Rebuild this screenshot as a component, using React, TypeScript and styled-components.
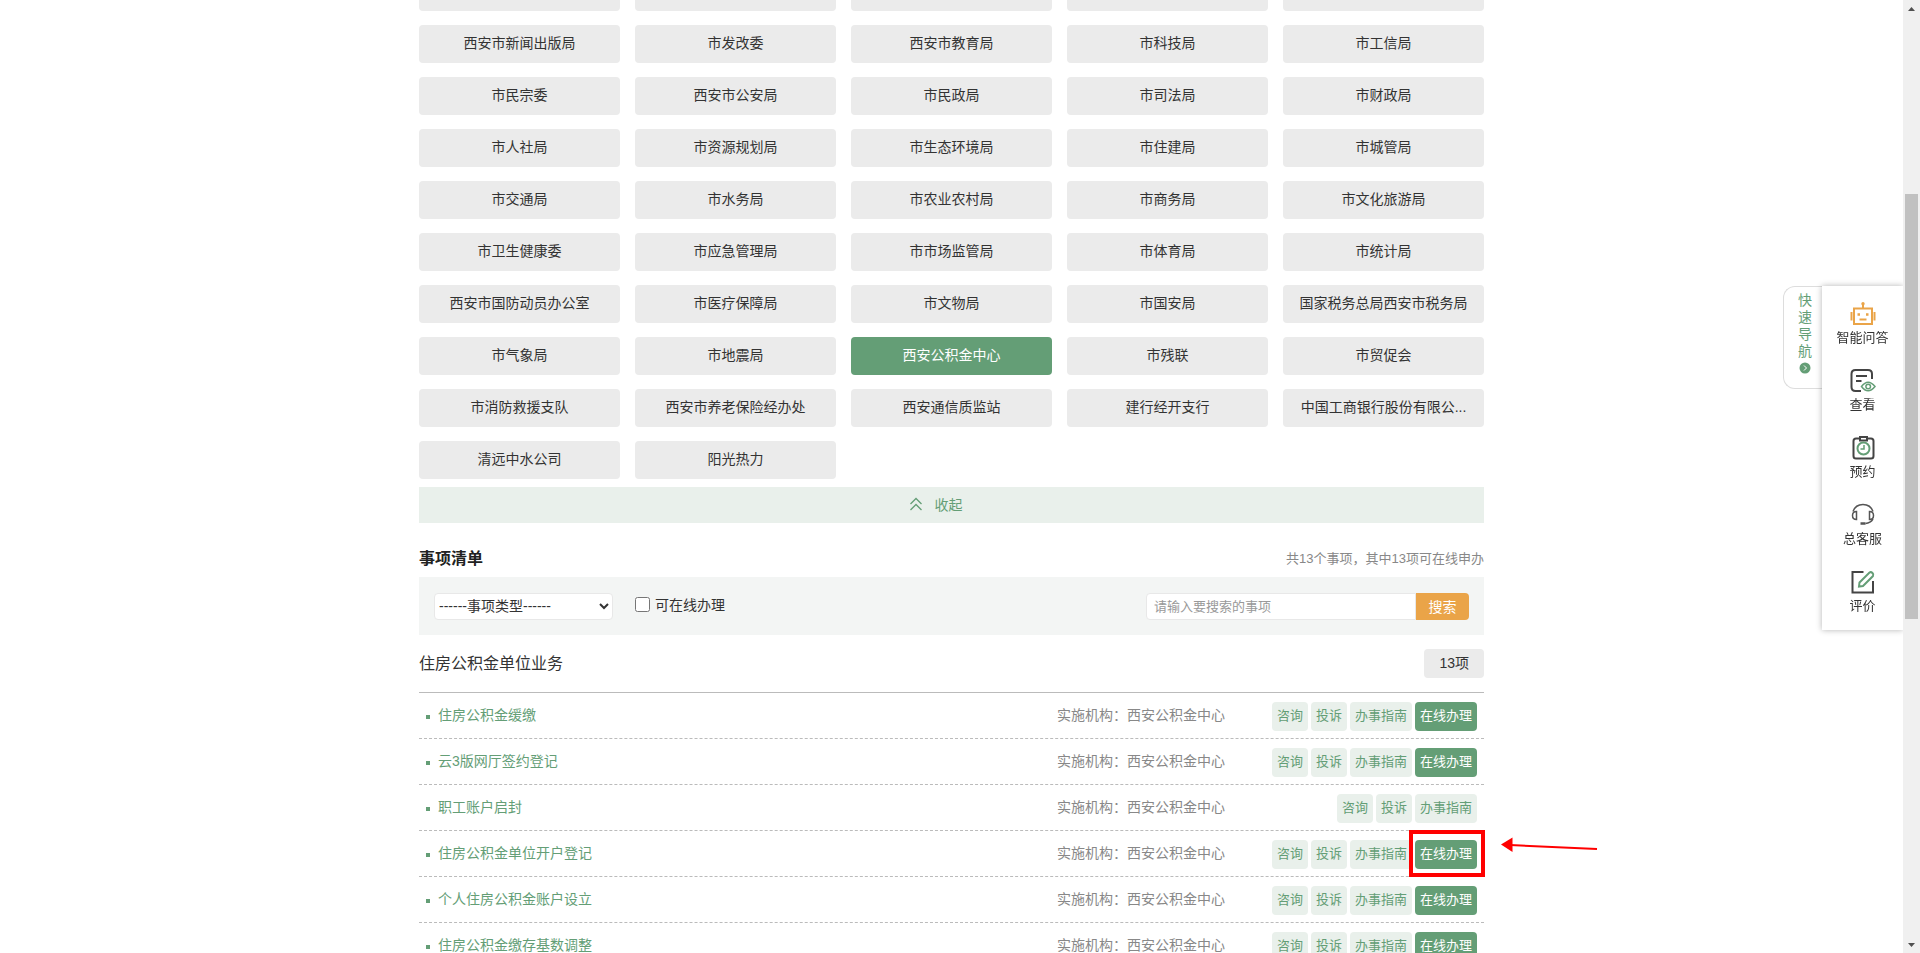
import React from "react";
import styled, { createGlobalStyle } from "styled-components";

const GREEN = "#649e76";
const MINT = "#e9f0eb";
const GREY = "#ebebeb";

const GlobalStyle = createGlobalStyle`
  * { box-sizing: border-box; }
  body {
    margin: 0;
    background: #fff;
    color: #333;
    font-family: "Liberation Sans", "Noto Sans CJK SC", sans-serif;
    font-size: 14px;
    line-height: 20px;
  }
  button, input, select { font-family: inherit; font-size: inherit; color: inherit; margin: 0; }
  a { color: inherit; text-decoration: none; }
  h2, h3, ul { margin: 0; padding: 0; font-weight: normal; }
  ul { list-style: none; }
`;

const Window = styled.div`
  display: flex;
  height: 100vh;
  overflow: hidden;
`;

const Main = styled.main`
  flex: 1;
  min-width: 0;
`;

const Container = styled.div`
  width: 100%;
  max-width: 1065px;
  margin: 0 auto;
`;

const DeptGrid = styled.div`
  display: grid;
  grid-template-columns: repeat(5, minmax(0, 1fr));
  gap: 14px 15px;
`;

const CellTail = styled.div`
  height: 11px;
  border-radius: 0 0 4px 4px;
  background: ${GREY};
`;

const DeptButton = styled.button<{ $active?: boolean }>`
  height: 38px;
  padding: 0 14px 2px;
  border: 0;
  border-radius: 4px;
  background: ${(p) => (p.$active ? GREEN : GREY)};
  color: ${(p) => (p.$active ? "#fff" : "#333")};
  line-height: 36px;
  white-space: nowrap;
  overflow: hidden;
  text-overflow: ellipsis;
  cursor: pointer;
`;

const Collapse = styled.button`
  display: flex;
  align-items: center;
  justify-content: center;
  gap: 12px;
  width: 100%;
  height: 36px;
  margin-top: 8px;
  padding: 0 32px 2px 0;
  border: 0;
  background: ${MINT};
  color: ${GREEN};
`;

const ListHeader = styled.div`
  display: flex;
  justify-content: space-between;
  align-items: center;
  height: 54px;
  padding-top: 18px;
`;

const ListTitle = styled.h2`
  font-size: 16px;
  font-weight: bold;
  color: #222;
`;

const Summary = styled.span`
  font-size: 13px;
  color: #888;
`;

const Filters = styled.form`
  display: flex;
  align-items: center;
  height: 58px;
  padding: 0 15px;
  background: #f3f5f4;
`;

const TypeSelect = styled.select`
  width: 179px;
  height: 27px;
  padding: 0;
  border: 1px solid #e8e8e8;
  border-radius: 4px;
  background: #fff;
`;

const CheckLabel = styled.label`
  display: flex;
  align-items: center;
  gap: 5px;
  margin: 0 auto 0 22px;
  padding-bottom: 3px;
  input { width: 15px; height: 15px; }
`;

const SearchInput = styled.input`
  width: 270px;
  height: 27px;
  padding: 0 7px;
  border: 1px solid #e8e8e8;
  border-radius: 4px 0 0 4px;
  background: #fff;
  font-size: 13px;
  &::placeholder { color: #999; }
`;

const SearchButton = styled.button`
  width: 53px;
  height: 27px;
  padding: 0;
  border: 0;
  border-radius: 0 4px 4px 0;
  background: #eaa448;
  color: #fff;
`;

const GroupHeader = styled.div`
  display: flex;
  align-items: center;
  justify-content: space-between;
  height: 58px;
  border-bottom: 1px solid #bbb;
`;

const GroupTitle = styled.h3`
  font-size: 16px;
`;

const Count = styled.span`
  padding: 0 15px;
  border-radius: 4px;
  background: ${GREY};
  line-height: 29px;
`;

const Item = styled.li`
  position: relative;
  display: grid;
  grid-template-columns: 1fr 180px 240px;
  align-items: center;
  height: 46px;
  padding-right: 7px;
  border-bottom: 1px dashed #bbb;
`;

const ItemLink = styled.a`
  display: flex;
  align-items: center;
  gap: 8px;
  padding: 0 0 2px 7px;
  color: ${GREEN};
  &::before {
    content: "";
    width: 4px;
    height: 4px;
    margin-top: 5px;
    background: ${GREEN};
  }
`;

const Org = styled.span`
  padding-bottom: 2px;
  color: #888;
`;

const Tags = styled.div`
  display: flex;
  justify-content: flex-end;
  gap: 3px;
  padding-top: 2px;
`;

const Tag = styled.a<{ $solid?: boolean }>`
  padding: 0 5px 2px;
  border-radius: 4px;
  background: ${(p) => (p.$solid ? GREEN : MINT)};
  color: ${(p) => (p.$solid ? "#fff" : GREEN)};
  font-size: 13px;
  line-height: 27px;
`;

const Highlight = styled.div`
  position: absolute;
  top: -1px;
  right: -1px;
  width: 76px;
  height: 47px;
  border: 4px solid #f00;
  pointer-events: none;
`;

const Arrow = styled.svg`
  position: absolute;
  top: 3px;
  left: calc(100% + 16px);
`;

const QuickNav = styled.aside`
  position: fixed;
  top: 286px;
  right: 17px;
  display: flex;
  align-items: flex-start;
`;

const NavTab = styled.button`
  display: flex;
  flex-direction: column;
  align-items: center;
  width: 39px;
  height: 103px;
  padding: 5px 0 0 4px;
  border: 1px solid #ddd;
  border-right: 0;
  border-radius: 12px 0 0 12px;
  background: #fff;
  color: ${GREEN};
  line-height: 17px;
  svg { margin-top: 2px; }
`;

const NavPanel = styled.nav`
  display: flex;
  flex-direction: column;
  gap: 19px;
  width: 81px;
  height: 344px;
  padding-top: 14px;
  background: #fff;
  box-shadow: 0 0 6px rgba(0, 0, 0, 0.3);
  clip-path: inset(-8px 0 -8px -8px);
`;

const NavItem = styled.a`
  display: flex;
  flex-direction: column;
  align-items: center;
  height: 48px;
  font-size: 13px;
  line-height: 20px;
`;

const ScrollTrack = styled.div`
  display: flex;
  flex-direction: column;
  align-items: center;
  width: 17px;
  padding: 7px 0 6px;
  background: #f0f0f0;
`;

const ScrollThumb = styled.div`
  width: 13px;
  flex: 424;
  background: #c1c1c1;
`;

const TrackSpace = styled.div<{ $size: number }>`
  flex: ${(p) => p.$size};
`;

const departments = [
  "西安市新闻出版局", "市发改委", "西安市教育局", "市科技局", "市工信局",
  "市民宗委", "西安市公安局", "市民政局", "市司法局", "市财政局",
  "市人社局", "市资源规划局", "市生态环境局", "市住建局", "市城管局",
  "市交通局", "市水务局", "市农业农村局", "市商务局", "市文化旅游局",
  "市卫生健康委", "市应急管理局", "市市场监管局", "市体育局", "市统计局",
  "西安市国防动员办公室", "市医疗保障局", "市文物局", "市国安局", "国家税务总局西安市税务局",
  "市气象局", "市地震局", "西安公积金中心", "市残联", "市贸促会",
  "市消防救援支队", "西安市养老保险经办处", "西安通信质监站", "建行经开支行", "中国工商银行股份有限公...",
  "清远中水公司", "阳光热力",
];

const items = [
  { name: "住房公积金缓缴", online: true },
  { name: "云3版网厅签约登记", online: true },
  { name: "职工账户启封", online: false },
  { name: "住房公积金单位开户登记", online: true, marked: true },
  { name: "个人住房公积金账户设立", online: true },
  { name: "住房公积金缴存基数调整", online: true },
];

const Icon = ({ children }: { children: React.ReactNode }) => (
  <svg width="28" height="28" viewBox="0 0 28 28" fill="none" stroke="#444" strokeWidth="2" aria-hidden="true">
    {children}
  </svg>
);

const navItems = [
  {
    label: "智能问答",
    icon: (
      <Icon>
        <g stroke="#eaa448">
          <path d="M5 8.500H23V24H5ZM14 8V4M2.500 12V20.500M25.500 12V20.500" />
          <path d="M10.500 19.500H17.500" />
          <circle cx="14" cy="3.800" r="1.700" fill="#eaa448" stroke="none" />
          <path d="M8.500 14.500H11M17 14.500H19.500" strokeWidth="2.500" />
        </g>
      </Icon>
    ),
  },
  {
    label: "查看",
    icon: (
      <Icon>
        <path d="M12 24H6.500Q2.500 24 2.500 20V7Q2.500 3 6.500 3H19Q23 3 23 7V12M7 9H18M7 14H12.500" />
        <g stroke={GREEN} strokeWidth="1.500">
          <path d="M12.500 19.500Q19 11 26 19.500Q19 28 12.500 19.500Z" />
          <circle cx="19.200" cy="19.500" r="2.300" />
        </g>
      </Icon>
    ),
  },
  {
    label: "预约",
    icon: (
      <Icon>
        <path d="M10 4.500H7Q4.500 4.500 4.500 7V22Q4.500 24.500 7 24.500H22Q24.500 24.500 24.500 22V7Q24.500 4.500 22 4.500H19M11 3H18V6.500H11Z" />
        <circle cx="14.500" cy="14.500" r="6" stroke={GREEN} />
        <path d="M15 11V15H11.500" stroke={GREEN} strokeWidth="1.500" />
      </Icon>
    ),
  },
  {
    label: "总客服",
    icon: (
      <Icon>
        <g stroke="#555" strokeWidth="1.500">
          <path d="M4 10.500Q6.500 3.500 14 3.500Q21.500 3.500 24 10.500M24 18Q21.500 22 16.500 22.500" />
          <path d="M7.500 10.500V18.500Q3.500 18.500 3.500 14.500Q3.500 10.500 7.500 10.500ZM20.500 10.500V18.500Q24.500 18.500 24.500 14.500Q24.500 10.500 20.500 10.500Z" />
          <path d="M11.500 22.500H16.500" strokeWidth="2.500" />
        </g>
      </Icon>
    ),
  },
  {
    label: "评价",
    icon: (
      <Icon>
        <path d="M14.500 4H3.500V24.500H24V13" />
        <path d="M10.500 14.500L20.500 4.500Q22 3.500 23.500 5Q25 6.500 24 8L14 18L10 18.500Z" stroke={GREEN} />
      </Icon>
    ),
  },
];

export default function App() {
  return (
    <>
      <GlobalStyle />
      <Window>
        <Main>
          <Container>
            <DeptGrid>
              {[0, 1, 2, 3, 4].map((n) => <CellTail key={n} />)}
              {departments.map((name) => (
                <DeptButton key={name} type="button" $active={name === "西安公积金中心"}>{name}</DeptButton>
              ))}
            </DeptGrid>
            <Collapse type="button">
              <svg width="14" height="14" viewBox="0 0 14 14" fill="none" stroke={GREEN} strokeWidth="1.3" aria-hidden="true">
                <path d="M1.500 7L7 1.500L12.500 7M1.500 13L7 7.500L12.500 13" />
              </svg>
              收起
            </Collapse>

            <ListHeader>
              <ListTitle>事项清单</ListTitle>
              <Summary>共13个事项，其中13项可在线申办</Summary>
            </ListHeader>
            <Filters onSubmit={(e) => e.preventDefault()}>
              <TypeSelect aria-label="事项类型">
                <option>------事项类型------</option>
              </TypeSelect>
              <CheckLabel>
                <input type="checkbox" />
                可在线办理
              </CheckLabel>
              <SearchInput type="text" aria-label="搜索事项" placeholder="请输入要搜索的事项" />
              <SearchButton type="submit">搜索</SearchButton>
            </Filters>

            <GroupHeader>
              <GroupTitle>住房公积金单位业务</GroupTitle>
              <Count>13项</Count>
            </GroupHeader>
            <ul>
              {items.map((item) => (
                <Item key={item.name}>
                  <ItemLink href="#">{item.name}</ItemLink>
                  <Org>实施机构：西安公积金中心</Org>
                  <Tags>
                    <Tag href="#">咨询</Tag>
                    <Tag href="#">投诉</Tag>
                    <Tag href="#">办事指南</Tag>
                    {item.online && <Tag href="#" $solid>在线办理</Tag>}
                  </Tags>
                  {item.marked && (
                    <>
                      <Highlight />
                      <Arrow width="100" height="24" viewBox="0 0 100 24" aria-hidden="true">
                        <path d="M10 11L97 15" stroke="#f00" strokeWidth="2" />
                        <path d="M1 10.500L12.500 3.500V18Z" fill="#f00" />
                      </Arrow>
                    </>
                  )}
                </Item>
              ))}
            </ul>
          </Container>
        </Main>

        <QuickNav>
          <NavTab type="button">
            <span>快</span>
            <span>速</span>
            <span>导</span>
            <span>航</span>
            <svg width="12" height="12" viewBox="0 0 12 12" aria-hidden="true">
              <circle cx="6" cy="6" r="5.500" fill={GREEN} />
              <path d="M5 3.500L7.500 6L5 8.500" fill="none" stroke="#fff" />
            </svg>
          </NavTab>
          <NavPanel>
            {navItems.map((n) => (
              <NavItem key={n.label} href="#">
                {n.icon}
                {n.label}
              </NavItem>
            ))}
          </NavPanel>
        </QuickNav>

        <ScrollTrack aria-hidden="true">
          <svg width="7" height="4" viewBox="0 0 7 4"><path d="M0 4L3.500 0L7 4Z" fill="#505050" /></svg>
          <TrackSpace $size={183} />
          <ScrollThumb />
          <TrackSpace $size={324} />
          <svg width="7" height="4" viewBox="0 0 7 4"><path d="M0 0L3.500 4L7 0Z" fill="#505050" /></svg>
        </ScrollTrack>
      </Window>
    </>
  );
}
